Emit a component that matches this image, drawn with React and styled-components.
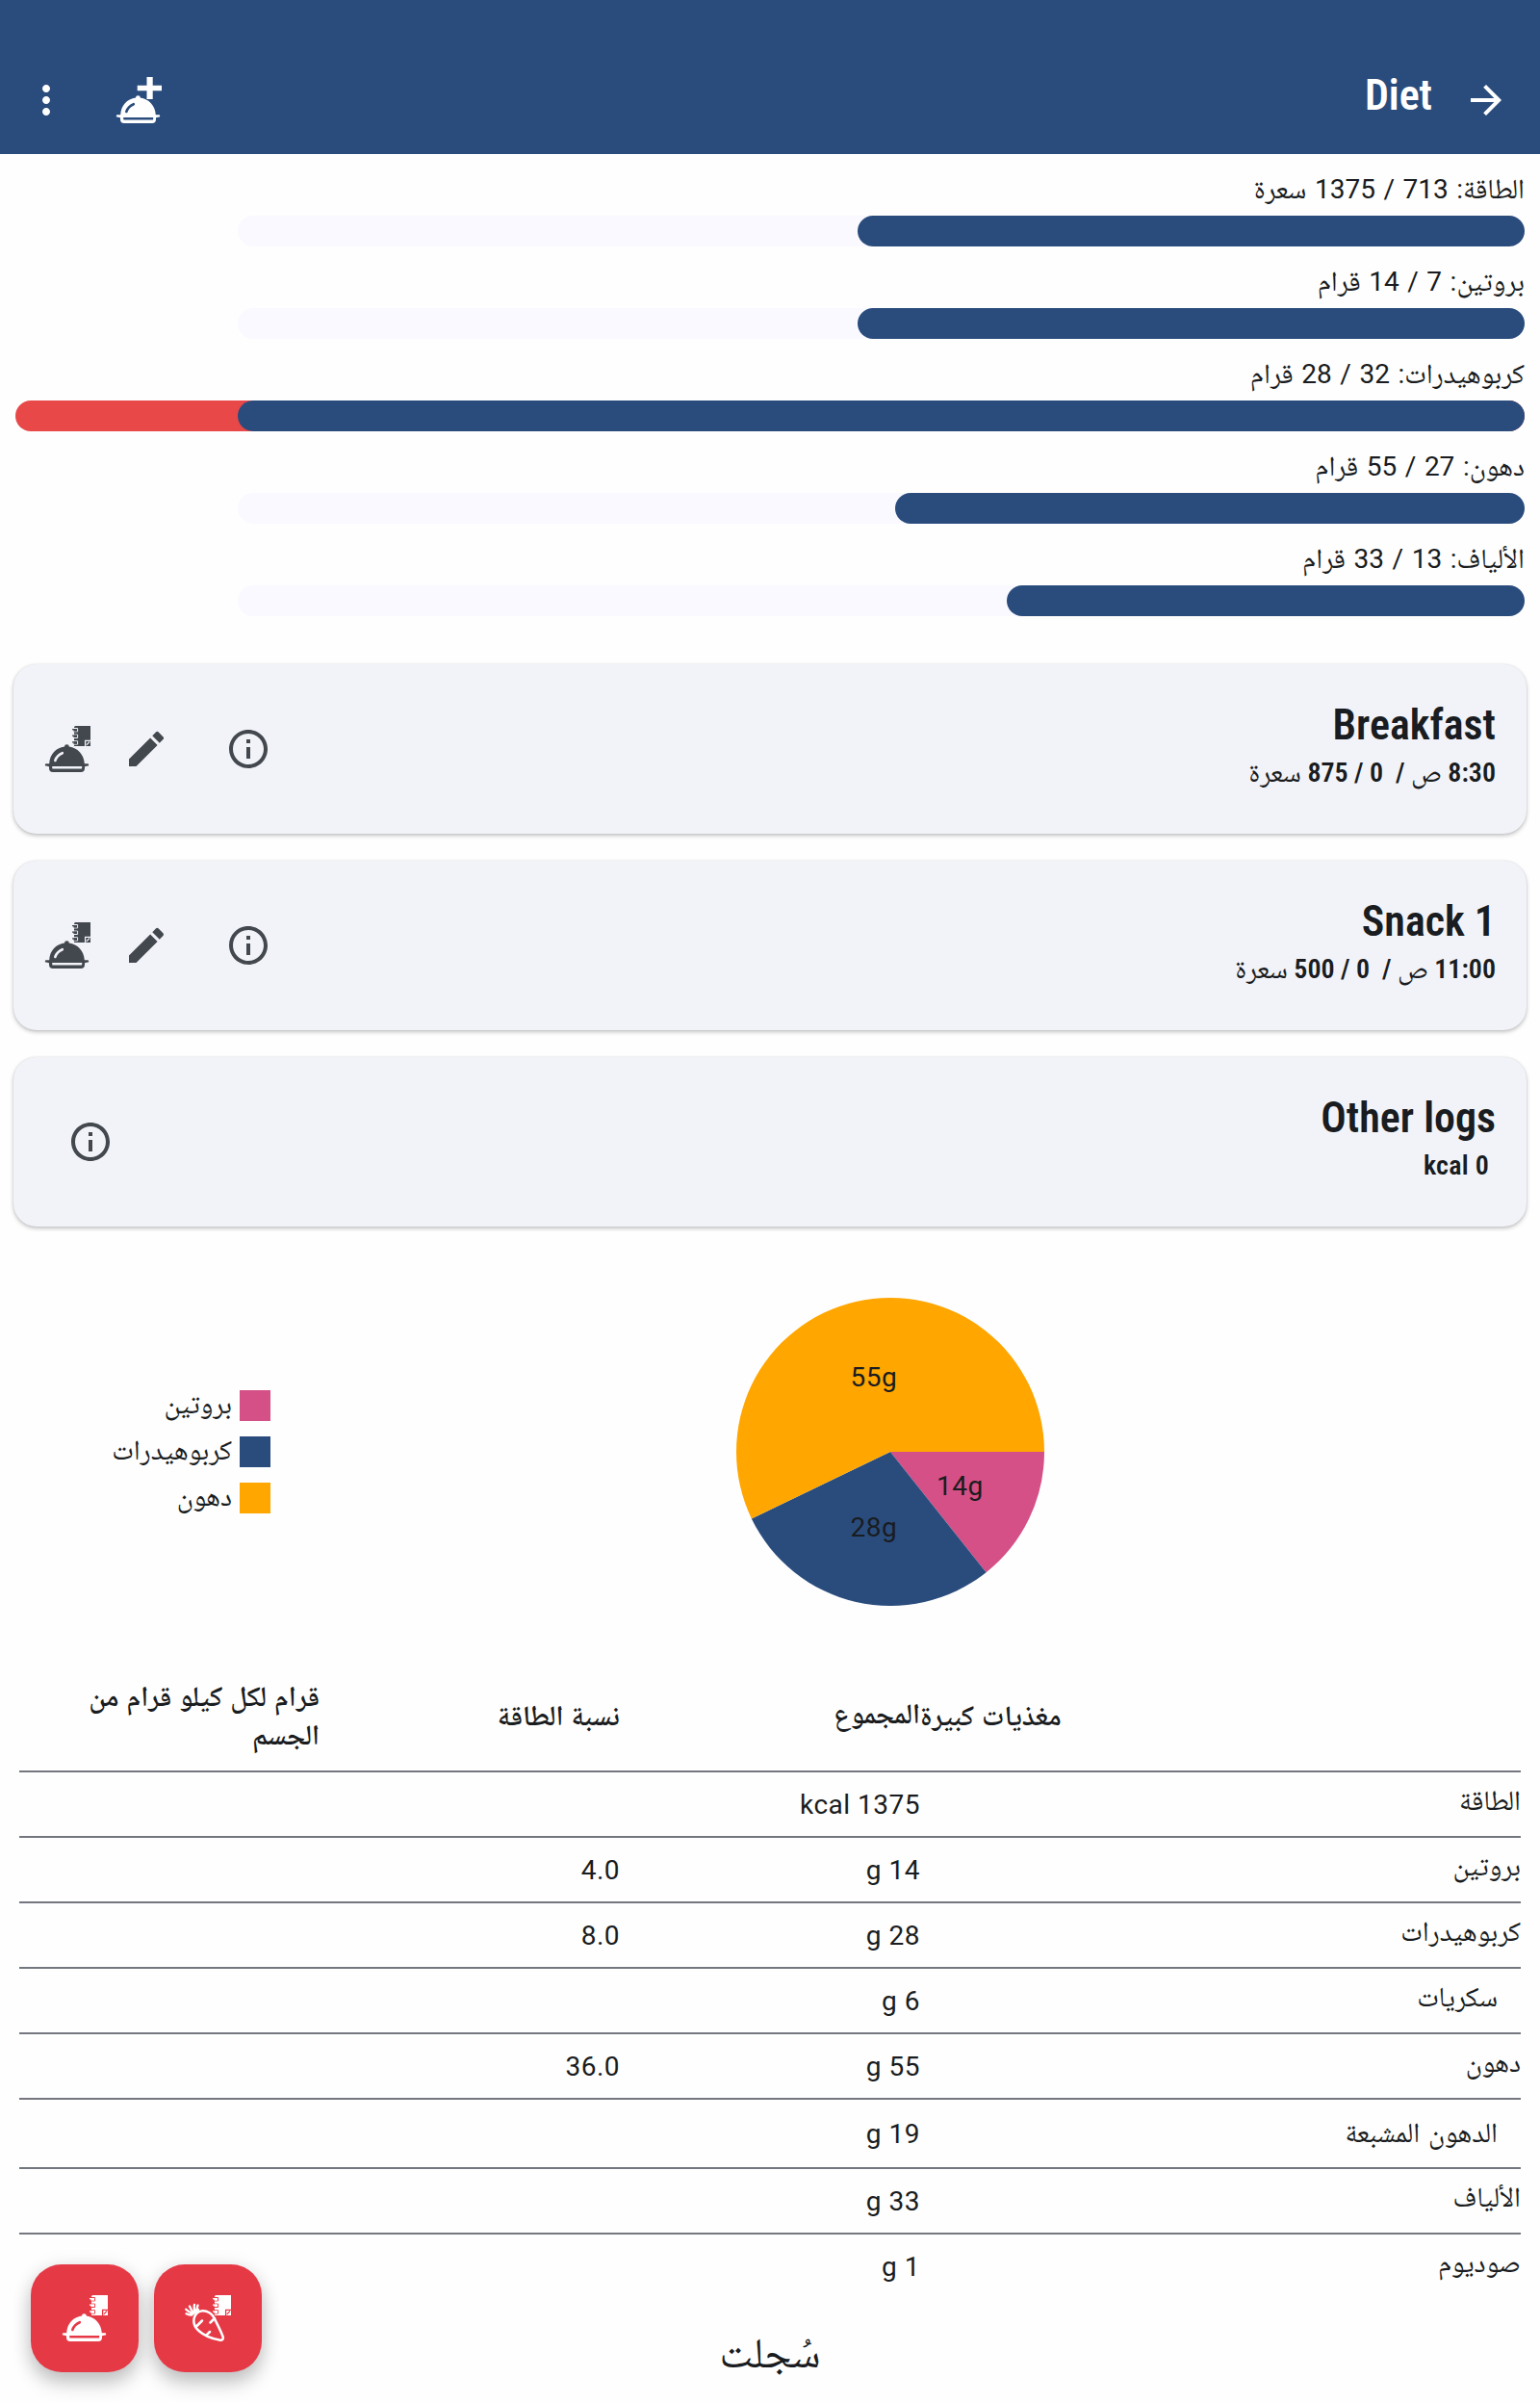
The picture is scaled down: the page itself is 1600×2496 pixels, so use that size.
import React from "react";
import styled, { createGlobalStyle } from "styled-components";
import { MdArrowForward, MdMoreVert, MdEdit, MdInfoOutline } from "react-icons/md";

const color = {
  primary: "#2a4c7d",
  accent: "#e63946",
  over: "#e84848",
  track: "#f9f9ff",
  card: "#f2f3f9",
  ink: "#191c20",
  icon: "#43474e",
  line: "#74777f",
  pink: "#d45087",
  orange: "#ffa600",
};

const body = `Roboto, "Noto Naskh Arabic", "DejaVu Sans", sans-serif`;
const condensed = `"Roboto Condensed", Roboto, "Noto Naskh Arabic", "DejaVu Sans", sans-serif`;

const GlobalStyle = createGlobalStyle`
  *, *::before, *::after { box-sizing: border-box; }
  body { margin: 0; background: #fefefe; }
`;

const Page = styled.div`
  position: relative;
  display: flex;
  flex-direction: column;
  width: 1600px;
  height: 2496px;
  overflow: hidden;
  direction: rtl;
  background: #fefefe;
  color: ${color.ink};
  font: 400 28px/40px ${body};
  letter-spacing: 0.5px;
  & > * { flex: none; }
`;

const Arabic = styled.span`
  font-size: ${(p) => p.$size || 29}px;
  font-weight: ${(p) => p.$weight || "inherit"};
  line-height: 1;
`;

const Mixed = ({ children, size, weight }) =>
  children
    .split(/([\u0600-\u06FF]+)/)
    .map((part, i) =>
      i % 2 ? <Arabic key={i} $size={size} $weight={weight}>{part}</Arabic> : part
    );

const AppBar = styled.header`
  display: flex;
  align-items: center;
  height: 160px;
  padding: 48px 32px 0 24px;
  background: ${color.primary};
  color: #fff;
`;

const AppTitle = styled.h1`
  flex: 1;
  margin: 0;
  padding: 0 32px 10px;
  font: 600 44px/52px ${condensed};
  letter-spacing: 0;
`;

const IconButton = styled.button`
  display: flex;
  flex: none;
  width: 48px;
  height: 48px;
  margin: 0;
  margin-inline-start: ${(p) => p.$gap || 0}px;
  padding: 0;
  border: 0;
  background: none;
  color: inherit;
  svg { display: block; width: 48px; height: 48px; }
`;

const Goals = styled.section`
  display: flex;
  flex-direction: column;
  padding: 0 16px;
`;

const GoalLabel = styled.div`
  height: 64px;
  padding-top: 9px;
  line-height: 55px;
  white-space: nowrap;
  word-spacing: 1.6px;
`;

const GoalBar = styled.div`
  width: ${(p) => (p.$over ? 1568 : 1337)}px;
  height: 32px;
  border-radius: 16px;
  background: ${(p) => (p.$over ? color.over : color.track)};
`;

const GoalFill = styled.div`
  height: 100%;
  border-radius: 16px;
  background: ${color.primary};
`;

const Cards = styled.section`
  display: flex;
  flex-direction: column;
  gap: 28px;
  margin-top: 50px;
  padding: 0 14px;
`;

const Card = styled.article`
  display: flex;
  align-items: center;
  height: 176px;
  padding: 0 32px;
  padding-inline-end: ${(p) => p.$end || 32}px;
  border-radius: 24px;
  background: ${color.card};
  box-shadow: 0 2px 4px rgba(0, 0, 0, 0.24), 0 0 2px rgba(0, 0, 0, 0.1);
  color: ${color.icon};
`;

const CardText = styled.div`
  flex: 1;
  padding-bottom: 10px;
  color: ${color.ink};
`;

const CardTitle = styled.h2`
  margin: 0;
  font: 600 44px/58px ${condensed};
  letter-spacing: 0;
`;

const CardMeta = styled.div`
  font: 600 28px/41px ${condensed};
  letter-spacing: 0.3px;
  white-space: pre;
`;

const ChartRow = styled.section`
  display: flex;
  align-items: center;
  justify-content: space-between;
  height: 320px;
  margin-top: 74px;
  padding-inline: 515px 115px;
`;

const Pie = styled.svg`
  display: block;
  width: 320px;
  height: 320px;
  direction: ltr;
`;

const PieLabel = styled.text`
  fill: ${color.ink};
  font: 400 28px ${body};
  letter-spacing: 0.5px;
`;

const Legend = styled.ul`
  display: flex;
  flex-direction: column;
  gap: 16px;
  width: 166px;
  margin: 0;
  padding: 0;
  list-style: none;
`;

const LegendItem = styled.li`
  display: flex;
  gap: 8px;
  height: 32px;
  line-height: 22px;
  white-space: nowrap;
  &::before {
    content: "";
    width: 32px;
    height: 32px;
    background: ${(p) => p.$color};
  }
`;

const Table = styled.div`
  display: flex;
  flex-direction: column;
  margin: 58px 20px 0;
`;

const Row = styled.div`
  display: grid;
  grid-template-columns: 2fr 1fr 1fr 1fr;
  align-items: center;
  height: ${(p) => (p.$last ? 66 : p.$tall ? 72 : 68)}px;
  border-bottom: ${(p) => (p.$last ? 0 : 2)}px solid ${color.line};
`;

const HeadRow = styled(Row)`
  height: 115px;
  font-weight: 600;
  word-spacing: 1px;
`;

const HeadCell = styled.div`
  padding-bottom: ${(p) => p.$lift || 0}px;
  padding-inline-end: ${(p) => (p.$end ? 0 : 24)}px;
  text-align: ${(p) => (p.$end ? "end" : "start")};
`;

const Label = styled.div`
  padding-inline-start: ${(p) => (p.$sub ? 24 : 0)}px;
  padding-bottom: ${(p) => (p.$tall ? 1 : 6)}px;
  word-spacing: 1.7px;
`;

const Cell = styled.div`
  padding-top: 1px;
`;

const Footer = styled.h2`
  margin: 25px 0 0;
  font: 400 44px/64px ${body};
  text-align: center;
`;

const Fabs = styled.div`
  position: absolute;
  left: 32px;
  bottom: 32px;
  display: flex;
  flex-direction: row-reverse;
  gap: 16px;
`;

const Fab = styled.button`
  display: flex;
  align-items: center;
  justify-content: center;
  width: 112px;
  height: 112px;
  padding: 0;
  border: 0;
  border-radius: 32px;
  background: ${color.accent};
  color: #fff;
  box-shadow: 0 12px 20px rgba(0, 0, 0, 0.2), 0 2px 20px rgba(0, 0, 0, 0.1);
  svg { display: block; width: 48px; height: 48px; }
`;

const Dish = ({ bg }) => (
  <>
    <path
      fill="currentColor"
      d="M5.2 39.2C5.6 30 12 22.6 21 21.6a2.4 2.4 0 1 1 4.8 0C34.500 22.600 41.300 30 41.800 39.200h3.200a1.200 1.200 0 0 1 0 2.400l-3 .6v1.800a4 4 0 0 1-4 4H9a4 4 0 0 1-4-4v-1.800l-3-.6a1.200 1.200 0 0 1 0-2.400z"
    />
    <path d="M11.300 36C12.500 32.300 15 29.700 18.800 28.200" fill="none" stroke={bg} strokeWidth="2.600" strokeLinecap="round" />
    <path d="M8.200 42h31v1.400a1.200 1.200 0 0 1-1.200 1.200H9.400a1.200 1.200 0 0 1-1.200-1.200z" fill={bg} />
  </>
);

const Notebook = ({ bg }) => (
  <>
    <path fill="currentColor" d="M32.500 0H48v21H31V1.500Q31 0 32.500 0z" />
    {[4, 10.600, 17.200].map((y) => (
      <g key={y}>
        <path d={`M31 ${y - 1.500}h3.600v3.400h-3.600`} fill="none" stroke={bg} strokeWidth="1" />
        <path d={`M29 ${y - 0.400}h4.400v1.200h-3`} fill="none" stroke="currentColor" strokeWidth="1.300" />
      </g>
    ))}
    <path d="M42.600 21v-5.600H48" fill="none" stroke={bg} strokeWidth="1.300" />
    <path d="M43.800 19.800L47 16.500" fill="none" stroke={bg} strokeWidth="1.100" />
  </>
);

const DishPlus = () => (
  <svg viewBox="0 0 48 48" aria-hidden="true">
    <path fill="currentColor" d="M32.500 0h6.200v8.700H48v5.600h-9.300V23h-6.200v-8.700h-9.800V8.700h9.800z" />
    <Dish bg={color.primary} />
  </svg>
);

const DishNote = ({ bg }) => (
  <svg viewBox="0 0 48 48" aria-hidden="true">
    <Notebook bg={bg} />
    <Dish bg={bg} />
  </svg>
);

const CarrotNote = () => {
  const outline =
    "M9.800 23.500C11 19.500 14.500 16.500 18.500 16.200C23.500 16 28.500 19.500 30.500 23.500C33.500 30 37.800 37.500 39.700 43.500C40.200 46 38.500 47.200 36 46.600C29 45.300 19.500 41.500 14.500 37C10 33 8.600 28 9.800 23.500z";
  return (
    <svg viewBox="0 0 48 48" aria-hidden="true">
      <Notebook bg={color.accent} />
      <path d={outline} fill={color.accent} stroke={color.accent} strokeWidth="4.500" />
      <path
        d={`${outline}M18 26.500l-5.500 5.500M31 24l-4.500 4.500M26 38l-3.500 3.500`}
        fill="none"
        stroke="currentColor"
        strokeWidth="2.500"
        strokeLinecap="round"
        strokeLinejoin="round"
      />
      <path
        d="M7.500 20.300C5.500 20.800 3.500 20.300 1.600 19.300M8 19C5.500 18 3 16.500 1.300 14.700M9 18C7 16 6 14 5 11.500M10.500 17C9.500 14.500 9.500 12.500 10 10M12 16C12.500 14 13 12.500 13.500 10.500M7.500 20L14 15"
        fill="none"
        stroke="currentColor"
        strokeWidth="2.300"
        strokeLinecap="round"
      />
    </svg>
  );
};

const point = (deg) => {
  const a = (deg * Math.PI) / 180;
  return `${160 + 160 * Math.cos(a)} ${160 + 160 * Math.sin(a)}`;
};
const slice = (from, to) =>
  `M160 160L${point(from)}A160 160 0 ${to - from > 180 ? 1 : 0} 1 ${point(to)}z`;

const goals = [
  { text: "الطاقة: 713 / 1375 سعرة", value: 693 },
  { text: "بروتين: 7 / 14 قرام", value: 693 },
  { text: "كربوهيدرات: 32 / 28 قرام", value: 1337, over: true },
  { text: "دهون: 27 / 55 قرام", value: 654 },
  { text: "الألياف: 13 / 33 قرام", value: 538 },
];

const meals = [
  { name: "Breakfast", meta: "8:30 ص /  0 / 875 سعرة", editable: true },
  { name: "Snack 1", meta: "11:00 ص /  0 / 500 سعرة", editable: true },
  { name: "Other logs", meta: " 0 kcal" },
];

const legend = [
  { name: "بروتين", fill: color.pink },
  { name: "كربوهيدرات", fill: color.primary },
  { name: "دهون", fill: color.orange },
];

const nutrients = [
  { name: "الطاقة", total: "1375 kcal" },
  { name: "بروتين", total: "14 g", share: "4.0" },
  { name: "كربوهيدرات", total: "28 g", share: "8.0" },
  { name: "سكريات", total: "6 g", sub: true },
  { name: "دهون", total: "55 g", share: "36.0" },
  { name: "الدهون المشبعة", total: "19 g", sub: true, tall: true },
  { name: "الألياف", total: "33 g" },
  { name: "صوديوم", total: "1 g" },
];

export default function App() {
  return (
    <Page lang="ar">
      <GlobalStyle />
      <AppBar>
        <IconButton><MdArrowForward /></IconButton>
        <AppTitle>Diet</AppTitle>
        <IconButton><DishPlus /></IconButton>
        <IconButton $gap={48}><MdMoreVert /></IconButton>
      </AppBar>

      <Goals>
        {goals.map((g) => (
          <div key={g.text}>
            <GoalLabel><Mixed>{g.text}</Mixed></GoalLabel>
            <GoalBar $over={g.over}>
              <GoalFill style={{ width: g.value }} />
            </GoalBar>
          </div>
        ))}
      </Goals>

      <Cards>
        {meals.map((m) => (
          <Card key={m.name} $end={m.editable ? 32 : 56}>
            <CardText>
              <CardTitle>{m.name}</CardTitle>
              <CardMeta><Mixed weight={400}>{m.meta}</Mixed></CardMeta>
            </CardText>
            <IconButton><MdInfoOutline /></IconButton>
            {m.editable && (
              <>
                <IconButton $gap={58}><MdEdit /></IconButton>
                <IconButton $gap={34}><DishNote bg={color.card} /></IconButton>
              </>
            )}
          </Card>
        ))}
      </Cards>

      <ChartRow>
        <Pie viewBox="0 0 320 320">
          <path d={slice(0, 51.5)} fill={color.pink} />
          <path d={slice(51.5, 154.3)} fill={color.primary} />
          <path d={slice(154.3, 360)} fill={color.orange} />
          <PieLabel x="118.500" y="92">55g</PieLabel>
          <PieLabel x="208" y="205">14g</PieLabel>
          <PieLabel x="118.500" y="248">28g</PieLabel>
        </Pie>
        <Legend>
          {legend.map((l) => (
            <LegendItem key={l.name} $color={l.fill}>
              <span><Mixed>{l.name}</Mixed></span>
            </LegendItem>
          ))}
        </Legend>
      </ChartRow>

      <Table>
        <HeadRow>
          <HeadCell $end><Mixed size={29.500}>مغذيات كبيرة</Mixed></HeadCell>
          <HeadCell $lift={4}><Mixed size={29.500}>المجموع</Mixed></HeadCell>
          <HeadCell><Mixed size={29.500}>نسبة الطاقة</Mixed></HeadCell>
          <HeadCell><Mixed size={29.500}>قرام لكل كيلو قرام من الجسم</Mixed></HeadCell>
        </HeadRow>
        {nutrients.map((n, i) => (
          <Row key={n.name} $tall={n.tall} $last={i === nutrients.length - 1}>
            <Label $sub={n.sub} $tall={n.tall}><Mixed>{n.name}</Mixed></Label>
            <Cell>{n.total}</Cell>
            <Cell>{n.share}</Cell>
          </Row>
        ))}
      </Table>

      <Footer>سُجلت</Footer>

      <Fabs>
        <Fab><DishNote bg={color.accent} /></Fab>
        <Fab><CarrotNote /></Fab>
      </Fabs>
    </Page>
  );
}
